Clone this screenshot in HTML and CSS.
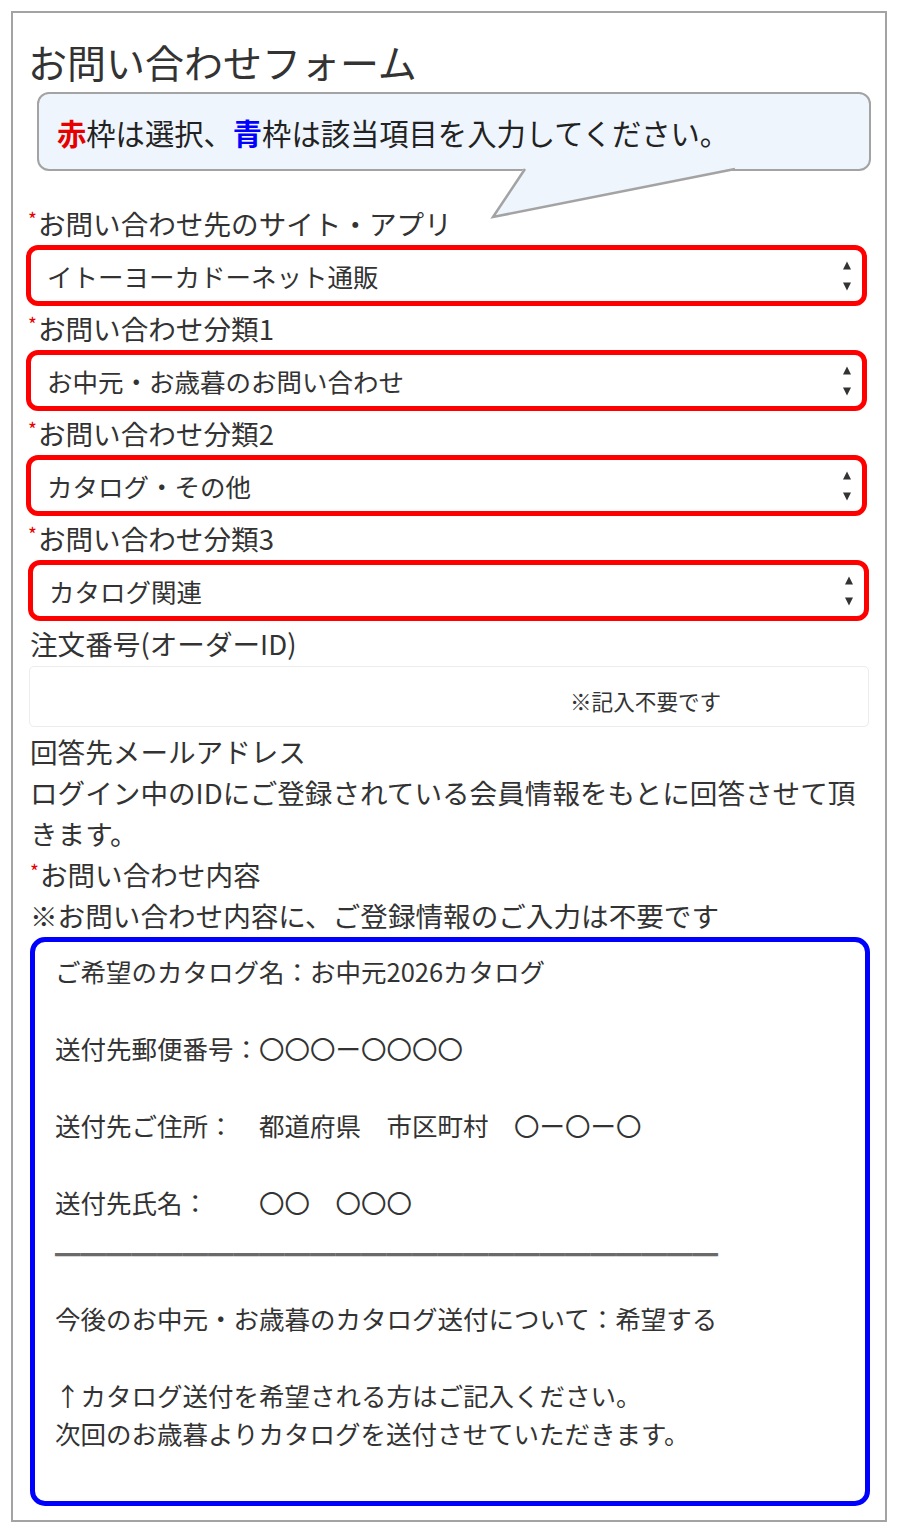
FILE: index.html
```html
<!DOCTYPE html>
<html lang="ja">
<head>
<meta charset="utf-8">
<title>お問い合わせフォーム</title>
<link rel="stylesheet" href="styles.css">
</head>
<body>
<div class="frame">
  <h1 class="title">お問い合わせフォーム</h1>
  <div class="callout">
    <p class="callout-text"><b class="red">赤</b>枠は選択、<b class="blue">青</b>枠は該当項目を入力してください。</p>
    <svg class="tail" width="834" height="52" viewBox="0 0 834 52">
      <polygon points="487,0 456,49 699,0" fill="#eef5fc"/>
      <polyline points="488,1 456,49 698,1" fill="none" stroke="#a3a3a3" stroke-width="2.5" stroke-linejoin="miter"/>
    </svg>
  </div>

  <div class="label label-first"><span class="req">*</span>お問い合わせ先のサイト・アプリ</div>
  <div class="select"><span>イトーヨーカドーネット通販</span><svg class="arrows" width="10" height="30" viewBox="0 0 10 30"><polygon points="5,0.5 9,8.5 1,8.5" fill="#333"/><polygon points="1,21.5 9,21.5 5,29.5" fill="#333"/></svg></div>

  <div class="label"><span class="req">*</span>お問い合わせ分類1</div>
  <div class="select"><span>お中元・お歳暮のお問い合わせ</span><svg class="arrows" width="10" height="30" viewBox="0 0 10 30"><polygon points="5,0.5 9,8.5 1,8.5" fill="#333"/><polygon points="1,21.5 9,21.5 5,29.5" fill="#333"/></svg></div>

  <div class="label"><span class="req">*</span>お問い合わせ分類2</div>
  <div class="select"><span>カタログ・その他</span><svg class="arrows" width="10" height="30" viewBox="0 0 10 30"><polygon points="5,0.5 9,8.5 1,8.5" fill="#333"/><polygon points="1,21.5 9,21.5 5,29.5" fill="#333"/></svg></div>

  <div class="label"><span class="req">*</span>お問い合わせ分類3</div>
  <div class="select select-last"><span>カタログ関連</span><svg class="arrows" width="10" height="30" viewBox="0 0 10 30"><polygon points="5,0.5 9,8.5 1,8.5" fill="#333"/><polygon points="1,21.5 9,21.5 5,29.5" fill="#333"/></svg></div>

  <div class="label label-plain">注文番号(オーダーID)</div>
  <div class="input"><span class="input-note">※記入不要です</span></div>

  <div class="text-block">
    <div class="line">回答先メールアドレス</div>
    <div class="line">ログイン中のIDにご登録されている会員情報をもとに回答させて頂</div>
    <div class="line">きます。</div>
    <div class="line"><span class="req">*</span>お問い合わせ内容</div>
    <div class="line">※お問い合わせ内容に、ご登録情報のご入力は不要です</div>
  </div>

  <div class="textarea">
    <div class="ta-line">ご希望のカタログ名：お中元2026カタログ</div>
    <div class="ta-line">&nbsp;</div>
    <div class="ta-line">送付先郵便番号：〇〇〇ー〇〇〇〇</div>
    <div class="ta-line">&nbsp;</div>
    <div class="ta-line">送付先ご住所：　都道府県　市区町村　〇ー〇ー〇</div>
    <div class="ta-line">&nbsp;</div>
    <div class="ta-line">送付先氏名：　　〇〇　〇〇〇</div>
    <div class="ta-line rule">＿＿＿＿＿＿＿＿＿＿＿＿＿＿＿＿＿＿＿＿＿＿＿＿＿＿</div>
    <div class="ta-line">&nbsp;</div>
    <div class="ta-line">今後のお中元・お歳暮のカタログ送付について：希望する</div>
    <div class="ta-line">&nbsp;</div>
    <div class="ta-line">↑カタログ送付を希望される方はご記入ください。</div>
    <div class="ta-line">次回のお歳暮よりカタログを送付させていただきます。</div>
  </div>
</div>
</body>
</html>
```

FILE: styles.css
```css
* { box-sizing: border-box; }
html, body { margin: 0; padding: 0; background: #ffffff; }
body {
  font-family: "Noto Sans CJK JP", "Noto Sans", sans-serif;
  color: #333333;
  width: 898px;
  height: 1532px;
  overflow: hidden;
}
.frame {
  margin: 11px;
  width: 876px;
  height: 1511px;
  border: 2px solid #a3a3a3;
  padding: 22px 18px 0 15px;
  display: flex;
  flex-direction: column;
}
.title {
  margin: 0;
  font-size: 39px;
  font-weight: normal;
  line-height: 52px;
  height: 52px;
  color: #333;
}
.callout {
  position: relative;
  margin: 5px 0 0 9px;
  width: 834px;
  height: 79px;
  background: #eef5fc;
  border: 2.5px solid #a3a3a3;
  border-radius: 12px;
  display: flex;
  align-items: center;
  padding-left: 18px;
}
.callout-text {
  margin: 0;
  font-size: 29.3px;
  line-height: 36px;
  color: #222;
  white-space: nowrap;
}
.callout-text b { font-weight: bold; }
.red { color: #e60000; }
.blue { color: #0000ff; }
.tail {
  position: absolute;
  left: -2.5px;
  top: 74px;
  overflow: visible;
}
.label {
  font-size: 27.6px;
  line-height: 40px;
  height: 40px;
  margin-top: 2px;
  white-space: nowrap;
}
.label-first { margin-top: 32px; }
.label-plain { padding-left: 2px; }
.req {
  color: #e60000;
  font-size: 19px;
  vertical-align: top;
  position: relative;
  top: -4px;
  margin-right: 1px;
}
.select {
  margin-top: 2px;
  margin-left: -2px;
  width: 841px;
  height: 61px;
  border: 5px solid #ff0000;
  border-radius: 12px;
  background: #fff;
  display: flex;
  align-items: center;
  justify-content: space-between;
  padding: 0 10px 0 16px;
  font-size: 25.5px;
}
.select-last { margin-left: 0; }
.arrows { display: block; margin-top: 1px; }
.input {
  margin-top: 3px;
  margin-left: 1px;
  width: 840px;
  height: 61px;
  border: 1px solid #ececec;
  border-radius: 5px;
  display: flex;
  align-items: center;
  padding: 8px 0 0 540px;
}
.input-note { font-size: 21.6px; line-height: 30px; }
.text-block {
  margin-top: 4px;
  padding-left: 2px;
}
.line {
  font-size: 27.6px;
  line-height: 41px;
  height: 41px;
  white-space: nowrap;
}
.textarea {
  margin-top: 1px;
  margin-left: 2px;
  width: 840px;
  height: 569px;
  border: 5px solid #0000ff;
  border-radius: 15px;
  padding: 10px 0 0 20px;
}
.ta-line {
  font-size: 25.5px;
  line-height: 38.5px;
  height: 38.5px;
  white-space: nowrap;
}
.rule {
  color: #6a6a6a;
  font-weight: 900;
  text-shadow: 0 1px 0 #6a6a6a, 0 -1px 0 #6a6a6a;
}
```
